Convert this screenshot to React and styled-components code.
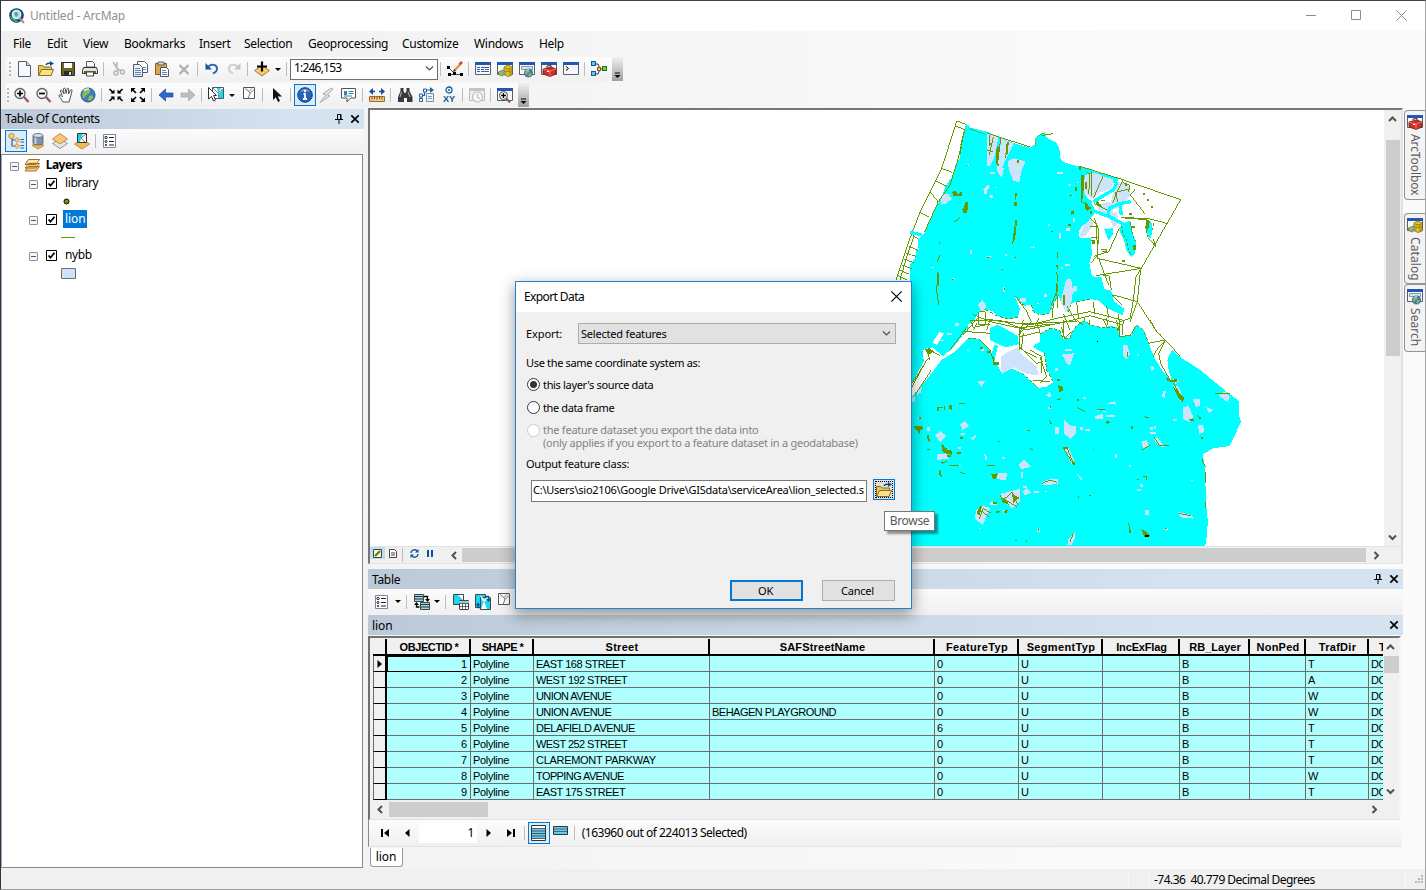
import React from "react";
import styled, { createGlobalStyle, css } from "styled-components";

const ui = `"Noto Sans", "Open Sans", sans-serif`;
const grid = `"Liberation Sans", Arial, sans-serif`;

const GlobalStyle = createGlobalStyle`
  * { box-sizing: border-box; }
  html, body { margin: 0; padding: 0; overflow: hidden; }
  body { font: 12px/16px ${ui}; color: #000; background: #f0f0f0; }
`;

/* ---------- text ---------- */
const Text = styled.span`
  white-space: pre;
  letter-spacing: ${(p) => p.$ls ?? -0.3}px;
  color: ${(p) => p.$color || "inherit"};
`;

/* ---------- window ---------- */
const Window = styled.div`
  position: relative;
  width: 1426px;
  height: 890px;
  display: flex;
  flex-direction: column;
  border: 1px solid #2b3346;
  border-top-color: #3c3d49;
  border-right-color: #a5a5a5;
  border-bottom-color: #9a9a9a;
  background: linear-gradient(90deg, #f0f0f0, #fafafa 80%);
  overflow: hidden;
`;
const TitleBar = styled.header`
  height: 30px;
  flex: none;
  background: #fff;
  display: flex;
  align-items: center;
  padding: 0 17px 0 8px;
  color: #8f8f8f;
`;
const AppName = styled.div`
  flex: 1;
  display: flex;
  align-items: center;
  gap: 5px;
`;
const WindowButtons = styled.div`
  display: flex;
  gap: 34px;
  margin: 0 1px 2px 0;
`;
const MenuBar = styled.nav`
  height: 26px;
  flex: none;
  display: flex;
  align-items: center;
  padding-left: 12px;
`;
const MenuItem = styled.div`
  width: ${(p) => p.$w}px;
`;
const ToolRows = styled.div`
  height: 51px;
  flex: none;
  display: flex;
  flex-direction: column;
  align-items: flex-start;
  gap: 2px;
`;
const Toolbar = styled.div`
  height: 24px;
  display: flex;
  align-items: center;
  margin-left: 5px;
  padding-left: ${(p) => p.$pad}px;
  background: linear-gradient(#fcfcfc, #f0f0f0);
  border-radius: 3px 0 0 3px;
`;
const Grip = styled.i`
  width: 2px;
  height: 15px;
  margin-right: ${(p) => p.$gap}px;
  background: repeating-linear-gradient(#b5b5b5 0 2px, transparent 2px 4px);
`;
const ToolButton = styled.div`
  width: 22px;
  height: 22px;
  flex: none;
  display: flex;
  align-items: center;
  justify-content: center;
  padding-bottom: ${(p) => p.$lift || 0}px;
  ${(p) => p.$on && css`
    background: #dcebf8;
    border: 1px solid #0078d7;
  `}
`;
const Separator = styled.i`
  width: 1px;
  height: 14px;
  flex: none;
  margin: 0 3px 0 2px;
  background: #bdbdbd;
`;
const Caret = styled.i`
  width: 11px;
  flex: none;
  display: flex;
  justify-content: center;
  padding-right: 2px;
  &::after {
    content: "";
    border: 3px solid transparent;
    border-top: 3px solid #000;
    border-bottom: 0;
  }
`;
const Overflow = styled.div`
  width: 11px;
  height: 24px;
  margin-left: 2px;
  display: flex;
  align-items: flex-end;
  justify-content: center;
  padding-bottom: 2px;
  background: linear-gradient(#f0f0f0, #a0a0a0);
`;
const ScaleBox = styled.div`
  width: 148px;
  height: 21px;
  display: flex;
  align-items: center;
  justify-content: space-between;
  padding: 0 3px 2px;
  background: #fff;
  border: 1px solid #6f6f6f;
`;

/* ---------- work area ---------- */
const Work = styled.div`
  flex: 1;
  min-height: 0;
  display: flex;
`;
const Contents = styled.aside`
  width: 363px;
  flex: none;
  margin-top: 1px;
  display: flex;
  flex-direction: column;
`;
const PanelHeader = styled.div`
  height: 20px;
  flex: none;
  display: flex;
  align-items: center;
  gap: 7px;
  padding: 0 5px 0 4px;
  background: linear-gradient(90deg, #bbc9d8, #d5e2f0 80%);
  & > ${Text} {
    margin-top: ${(p) => p.$drop || 0}px;
  }
`;
const Grow = styled.div`
  flex: 1;
`;
const PanelTools = styled.div`
  height: ${(p) => p.$h || 25}px;
  flex: none;
  display: flex;
  align-items: center;
  padding: 0 0 ${(p) => p.$lift || 0}px ${(p) => p.$pl ?? 4}px;
  background: linear-gradient(#fbfbfb, #f0f0f0);
`;
const Tree = styled.div`
  height: 714px;
  width: 362px;
  padding-top: 1px;
  background: #fff;
  border: 1px solid #828790;
  border-left-color: #a6a9b0;
`;
const TreeRow = styled.div`
  height: 18px;
  display: flex;
  align-items: center;
  padding-left: ${(p) => p.$indent}px;
`;
const LayersIcon = styled.div`
  margin: 0 3px 0 5px;
`;
const Toggle = styled.i`
  width: 9px;
  height: 9px;
  margin-top: 2px;
  display: flex;
  align-items: center;
  justify-content: center;
  border: 1px solid #919191;
  border-radius: 1px;
  background: #f6f6f6;
  &::after {
    content: "";
    width: 5px;
    height: 1px;
    background: #3c56a4;
  }
`;
const Check = styled.svg`
  width: 11px;
  height: 11px;
  margin: 0 6px 0 8px;
`;
const LayerName = styled.span`
  height: 18px;
  line-height: 17px;
  padding: 0 2px;
  letter-spacing: ${(p) => p.$ls}px;
  ${(p) => p.$selected && css`
    color: #fff;
    background: #0078d7;
  `}
`;
const Main = styled.main`
  width: 1035px;
  flex: none;
  margin-left: 4px;
  display: flex;
  flex-direction: column;
`;
const MapFrame = styled.section`
  height: 456px;
  flex: none;
  display: grid;
  grid-template-columns: 1014px 1fr;
  grid-template-rows: 436px 1fr;
  column-gap: 2px;
  border: 1px solid #e3e3e3;
  border-width: 2px 2px 1px 2px;
  border-top-color: #767676;
  border-left-color: #767676;
  background: #f0f0f0;
`;
const MapCanvas = styled.svg`
  display: block;
  width: 1014px;
  height: 436px;
  background: #fff;
`;
const VScroll = styled.div`
  display: flex;
  flex-direction: column;
  align-items: center;
  width: ${(p) => p.$w || 14}px;
  height: ${(p) => p.$h}px;
  background: #f0f0f0;
`;
const ScrollArrow = styled.div`
  width: ${(p) => p.$w || 14}px;
  height: ${(p) => p.$h || 17}px;
  padding: 0 ${(p) => p.$pr || 0}px ${(p) => p.$pb || 0}px ${(p) => p.$pl || 0}px;
  flex: none;
  display: flex;
  align-items: center;
  justify-content: center;
`;
const Thumb = styled.div`
  width: ${(p) => p.$w || 14}px;
  height: ${(p) => p.$h || 14}px;
  flex: none;
  background: #cdcdcd;
`;
const MapFooter = styled.div`
  height: 17px;
  grid-column: 1 / 3;
  display: flex;
  align-items: center;
  border-top: 1px solid #e3e3e3;
`;
const ViewButton = styled.div`
  width: ${(p) => p.$w || 15}px;
  height: 12px;
  margin-bottom: 4px;
  display: flex;
  align-items: center;
  justify-content: center;
  background: ${(p) => (p.$on ? "#bfdcf5" : "transparent")};
`;
const TableDock = styled.section`
  margin-top: 5px;
  display: flex;
  flex-direction: column;
`;
const GridFrame = styled.div`
  height: 184px;
  width: 1033px;
  flex: none;
  margin-top: 1px;
  padding: 1px 0 0 3px;
  border: 2px solid #6f6f6f;
  border-width: 2px 2px 1px 2px;
  border-right-color: #f4f4f4;
  border-bottom-color: #e0e0e0;
  background: #f0f0f0;
`;
const GridTop = styled.div`
  display: flex;
  height: 162px;
`;
const Sheet = styled.div`
  width: 1010px;
  display: grid;
  grid-template-columns: 14px 84px 63px 176px 225px 84px 84px 77px 70px 56px 63px 14px;
  grid-template-rows: 17px repeat(9, 16px);
  font: 11px/14px ${grid};
`;
const HeadCell = styled.div`
  overflow: hidden;
  padding: 1px 0 0 2px;
  text-align: center;
  font-weight: 700;
  letter-spacing: ${(p) => p.$ls ?? 0.35}px;
  background: #f0f0f0;
  border-right: 2px solid #000;
  border-bottom: 2px solid #000;
  white-space: nowrap;
  ${(p) => p.$partial && css`
    padding-left: 10px;
    text-align: left;
    border-right: 0;
  `}
`;
const Cell = styled.div`
  overflow: hidden;
  padding: 1px ${(p) => (p.$num ? 3 : 0)}px 0 2px;
  text-align: ${(p) => (p.$num ? "right" : "left")};
  letter-spacing: ${(p) => p.$ls ?? 0}px;
  white-space: nowrap;
  background: #afffff;
  border-right: ${(p) => (p.$last ? 0 : 1)}px solid #6c6c6c;
  border-bottom: 1px solid #6c6c6c;
  ${(p) => p.$current && css`
    outline: 1px solid #000;
    outline-offset: -1px;
  `}
`;
const RowHead = styled.div`
  display: flex;
  align-items: center;
  justify-content: center;
  background: #f0f0f0;
  border-left: 1px solid #6c6c6c;
  border-right: 2px solid #000;
  border-bottom: 1px solid #000;
`;
const HScroll = styled.div`
  height: 17px;
  display: flex;
  align-items: center;
  padding-right: 16px;
`;
const NavBar = styled.div`
  height: 27px;
  flex: none;
  width: 1034px;
  display: flex;
  align-items: center;
  padding-left: 5px;
  background: linear-gradient(#fcfcfc, #f0f0f0);
  border-left: 1px solid #8a8a8a;
  border-bottom: 1px solid #e3e3e3;
`;
const RecordBox = styled.div`
  width: 58px;
  height: 20px;
  padding: 2px 3px 0 0;
  text-align: right;
  background: #fff;
`;
const NavButton = styled.div`
  width: ${(p) => p.$w}px;
  display: flex;
  justify-content: center;
`;
const SelectionCount = styled.div`
  padding-left: 1px;
`;
const SheetTab = styled.div`
  width: 33px;
  height: 19px;
  margin: 1px 0 0 2px;
  padding-right: 1px;
  text-align: center;
  line-height: 18px;
  background: #fff;
  border: 1px solid #9a9a9a;
  border-top: 0;
  border-radius: 0 0 3px 3px;
`;
const SideTabs = styled.aside`
  width: 21px;
  margin-left: 1px;
  padding-top: 2px;
`;
const SideTab = styled.div`
  width: 21px;
  height: ${(p) => p.$h}px;
  margin-bottom: ${(p) => p.$gap || 0}px;
  display: flex;
  flex-direction: column;
  align-items: center;
  gap: 4px;
  padding: 3px 1px 0 0;
  border: 1px solid #949494;
  border-right: 0;
  border-radius: 4px 0 0 4px;
  background: #f3f3f3;
  span {
    writing-mode: vertical-rl;
    line-height: 14px;
    color: #5c5c5c;
    letter-spacing: ${(p) => p.$ls}px;
  }
`;
const StatusBar = styled.footer`
  height: 20px;
  flex: none;
  display: flex;
  align-items: center;
  background: #f0f0f0;
`;
const StatusCell = styled.div`
  width: ${(p) => p.$w}px;
  height: 18px;
  padding-left: 5px;
  line-height: 20px;
  border-right: 1px solid #fafafa;
`;

/* ---------- dialog ---------- */
const Dialog = styled.section`
  position: absolute;
  left: 514px;
  top: 280px;
  width: 397px;
  height: 328px;
  font-size: 11px;
  line-height: 13px;
  background: #f0f0f0;
  border: 1px solid #1883d7;
  box-shadow: 0 5px 14px 1px rgba(0, 0, 0, 0.38);
`;
const DialogTitle = styled.div`
  height: 30px;
  display: flex;
  align-items: center;
  justify-content: space-between;
  padding: 0 9px 2px 8px;
  font-size: 12px;
  background: #fff;
`;
const DialogRow = styled.div`
  display: flex;
  align-items: ${(p) => p.$align || "center"};
  height: ${(p) => p.$h || 16}px;
  margin-top: ${(p) => p.$mt}px;
  padding-left: ${(p) => p.$pl ?? 10}px;
  & > ${Text} {
    margin-top: -2px;
  }
`;
const ExportLabel = styled.label`
  width: 52px;
`;
const Select = styled.div`
  width: 318px;
  height: 21px;
  display: flex;
  align-items: center;
  justify-content: space-between;
  padding: 0 4px 0 2px;
  background: #e1e1e1;
  border: 1px solid #adadad;
`;
const Radio = styled.i`
  width: 13px;
  height: 13px;
  margin: 0 3px 1px 1px;
  flex: none;
  display: flex;
  align-items: center;
  justify-content: center;
  border: 1px solid ${(p) => (p.$off ? "#cccccc" : "#333")};
  border-radius: 50%;
  background: #fff;
  &::after {
    content: "";
    width: 7px;
    height: 7px;
    border-radius: 50%;
    background: ${(p) => (p.$on ? "#333" : "transparent")};
  }
`;
const TwoLines = styled.div`
  display: flex;
  flex-direction: column;
  margin-top: -1px;
`;
const PathInput = styled.div`
  width: 336px;
  height: 22px;
  padding: 2px 0 0 1px;
  background: #fff;
  border: 1px solid #7a7a7a;
`;
const BrowseButton = styled.div`
  width: 22px;
  height: 21px;
  margin: 0 0 2px 6px;
  display: flex;
  align-items: center;
  justify-content: center;
  border: 1px solid #0078d7;
  background: #e1e1e1;
  outline: 1px dotted #000;
  outline-offset: -3px;
`;
const Actions = styled.div`
  display: flex;
  justify-content: flex-end;
  gap: 19px;
  margin-top: 78px;
  padding-right: 16px;
`;
const PushButton = styled.div`
  width: 73px;
  height: 21px;
  display: flex;
  align-items: center;
  justify-content: center;
  padding-right: 2px;
  background: #e1e1e1;
  border: ${(p) => (p.$primary ? "2px solid #0078d7" : "1px solid #adadad")};
`;
const Tooltip = styled.div`
  position: absolute;
  left: 883px;
  top: 510px;
  width: 51px;
  height: 20px;
  text-align: center;
  line-height: 18px;
  color: #575757;
  background: #fff;
  border: 1px solid #767676;
  box-shadow: 3px 3px 2px rgba(0, 0, 0, 0.4);
`;

/* ---------- icons ---------- */
const Glyph = styled.svg`
  display: block;
  flex: none;
  overflow: visible;
`;
const Icon = ({ children, w = 16, h = 16 }) => (
  <Glyph width={w} height={h} viewBox={`0 0 ${w} ${h}`} fill="none">
    {children}
  </Glyph>
);
const WinFrame = () => (
  <>
    <path d="M.5 1.5h15v12H.5z" fill="#f4f7fb" stroke="#5a5f68" />
    <path d="M0 1h16v3H0z" fill="#2356b0" />
  </>
);
const Box = ({ x, y, s = 4, f, c }) => (
  <rect x={x + 0.5} y={y + 0.5} width={s} height={s} fill={f} stroke={c} />
);
const Lens = ({ plus }) => (
  <>
    <path d="M10 10l4.500 5" stroke="#9a5b50" strokeWidth="2.4" />
    <circle cx="6" cy="6.5" r="5" fill="#f4f6f8" stroke="#5b5f66" strokeWidth="1.3" />
    <path d={plus ? "M3 6.5h6M6 3.500v6" : "M3 6.5h6"} stroke="#000" strokeWidth="1.7" />
  </>
);
const Globe = ({ x = 8, y = 8, r = 7.2 }) => (
  <g transform={`translate(${x} ${y}) scale(${r / 7.2})`}>
    <circle r="7" fill="#3c7cc4" stroke="#2a5486" />
    <path d="M-4-5C-1-8 3-6 2-3S-2-1-3 2s-3 0-3-2zM1 1c3-2 5 0 4 2S2 7 0 5z" fill="#8dbb52" />
    <path d="M-4-4c1-2 3-2 5-2" stroke="#d8ecff" strokeWidth="1.4" />
  </g>
);
const Folder = () => (
  <Icon>
    <path d="M.5 14V4.5h4l1.5 1.5h7.5V14z" fill="#e8c95a" stroke="#8a6a20" />
    <path d="M.7 14.500L3.5 8.500h12l-2.500 6z" fill="#f7e28c" stroke="#8a6a20" />
    <path d="M8 4c1-2 3-2 5-1.500" stroke="#0f4c8c" strokeWidth="1.5" />
    <path d="M12 0l4 2.500-4 2.500z" fill="#0f4c8c" />
  </Icon>
);
const ListBox = () => (
  <Icon>
    <path d="M1.500 1.500h12v13h-12z" fill="#fff" stroke="#7886a0" />
    <path d="M7 4.500h5M7 8.500h5M7 12h5" stroke="#222" />
    <circle cx="4" cy="4.500" r="1.200" stroke="#222" />
    <circle cx="4" cy="8.500" r="1" stroke="#222" />
    <circle cx="4" cy="12" r="1" fill="#222" />
  </Icon>
);
const ToolboxWin = () => (
  <Icon>
    <WinFrame />
    <path d="M2 8l8-2 5 2v5l-6 2.500-7-2.500z" fill="#c8302a" stroke="#7a1512" strokeWidth=".8" />
    <path d="M2 8l7 2 6-2M9 10v5" stroke="#ff8d80" strokeWidth=".8" />
    <path d="M6 6.500V5l4-.5V6" stroke="#7a1512" />
    <path d="M6 10.500h2" stroke="#fff" />
  </Icon>
);
const CatalogWin = () => (
  <Icon>
    <WinFrame />
    <path d="M7 6l4-2 4 2v8l-4 1.500-4-2z" fill="#e3c31c" stroke="#7a6408" strokeWidth=".8" />
    <path d="M8.500 7.500l4 .5M8.500 10l4 .5M13 7v7" stroke="#7a6408" strokeWidth=".8" />
    <path d="M1.500 11l5-2 2.500 2.500-3.500 3.500-4-1.500z" fill="#c9b22a" stroke="#4d6d60" strokeWidth=".8" />
    <circle cx="6" cy="12" r="1.500" fill="#5bb0d8" />
  </Icon>
);
const SearchWin = () => (
  <Icon>
    <WinFrame />
    <path d="M2.500 5.500h11v3h-11z" fill="#dbe5f1" stroke="#8b97a8" />
    <Globe x={9.5} y={12} r={4.2} />
  </Icon>
);
const Pin = () => (
  <Icon w={8} h={10}>
    <path d="M1.500.5h3.500v5h-3.500zM-1 5.500h8M3 6v4" stroke="#000" />
    <path d="M4.500 0v6" stroke="#000" />
  </Icon>
);
const Close = ({ s = 8, w = 1.7, c = "#000" }) => (
  <Icon w={s} h={s}>
    <path d={`M.3.3L${s - 0.3} ${s - 0.3}M${s - 0.3} .3L.3 ${s - 0.3}`} stroke={c} strokeWidth={w} />
  </Icon>
);
const chevrons = {
  up: "M1 6l3.500-3.500L8 6",
  down: "M1 2.500L4.500 6 8 2.500",
  left: "M6 1L2.500 4.500 6 8",
  right: "M2.500 1L6 4.500 2.500 8",
};
const Chevron = ({ dir, w = 2 }) => (
  <Icon w={9} h={9}>
    <path d={chevrons[dir]} stroke="#505050" strokeWidth={w} />
  </Icon>
);
const OverflowGlyph = () => (
  <Icon w={7} h={7}>
    <path d="M1 1h5" stroke="#000" />
    <path d="M.5 3h6L3.500 6z" fill="#000" />
  </Icon>
);

const I = {
  logo: (
    <Icon>
      <circle cx="7.500" cy="7.500" r="7.300" fill="#0d4f7d" />
      <path d="M1 8c1 5 5 7 9 6l-5-4z" fill="#35a06c" />
      <circle cx="7.500" cy="6.500" r="4.200" fill="#a8dcef" stroke="#e8f4fa" strokeWidth="1.300" />
      <path d="M5 5l3-1 1 3-2 2z" fill="#5ba56f" />
      <path d="M10.500 10l4.500 5" stroke="#b98a70" strokeWidth="2" />
    </Icon>
  ),
  doc: (
    <Icon>
      <path d="M2.500.5h8l4 4v11h-12z" fill="#f5f9fe" stroke="#55606e" />
      <path d="M10.500.5v4h4" fill="#cfdcec" stroke="#55606e" />
    </Icon>
  ),
  open: <Folder />,
  save: (
    <Icon>
      <path d="M1.500 1.500h13v13h-13z" fill="#6f6420" stroke="#2c2a18" />
      <path d="M4 2h8v5H4z" fill="#fff" />
      <path d="M4 10h8v5H4z" fill="#2a2a2a" />
      <path d="M9 11h2v3H9z" fill="#ddd" />
    </Icon>
  ),
  print: (
    <Icon>
      <path d="M4.500 6V.5h6l2 2V6z" fill="#fff" stroke="#555" />
      <path d="M1.500 6.500h13l1 3v3H.5v-3z" fill="#e6e2cf" stroke="#333" />
      <path d="M2 11h12" stroke="#333" strokeWidth="1.5" />
      <path d="M4.500 11h7v4h-7z" fill="#fff" stroke="#444" />
    </Icon>
  ),
  cut: (
    <Icon>
      <path d="M3 1l6 9M7 1L6.500 8" stroke="#b4b4b4" strokeWidth="1.500" />
      <circle cx="6" cy="12" r="2" stroke="#b4b4b4" strokeWidth="1.400" />
      <circle cx="12.500" cy="11" r="2" stroke="#b4b4b4" strokeWidth="1.400" />
      <path d="M7 8l5 1.500" stroke="#b4b4b4" strokeWidth="1.300" />
    </Icon>
  ),
  copy: (
    <Icon>
      <path d="M5.500.5h7l3 3v8h-10z" fill="#fff" stroke="#4a5a70" />
      <path d="M1.500 3.500h6l3 3v9h-9z" fill="#eef4fc" stroke="#4a5a70" />
      <path d="M3 7.500h5M3 9.500h6M3 11.500h6M3 13.500h6M11 6.500h3M11 8.500h3" stroke="#5d84b5" />
    </Icon>
  ),
  paste: (
    <Icon>
      <path d="M1.500 2.500h11v11h-11z" fill="#d9a458" stroke="#8b5f22" />
      <path d="M4 1h6v3H4z" fill="#d8d8d8" stroke="#444" strokeWidth=".8" />
      <path d="M6.500 6.500h6l2 2v7h-8z" fill="#fff" stroke="#4a5a70" />
      <path d="M8 9.500h4M8 11.500h5M8 13.500h5" stroke="#5d84b5" />
    </Icon>
  ),
  del: (
    <Icon>
      <path d="M3.500 4l9 9M12.500 4l-9 9" stroke="#adadad" strokeWidth="2.200" />
    </Icon>
  ),
  undo: (
    <Icon>
      <path d="M4.500 5.500c3-3 8.500-2 8.500 2 0 2.500-1.500 4-4 5" stroke="#2a66b4" strokeWidth="1.900" />
      <path d="M1.500 2v6.500H8z" fill="#1d539c" />
    </Icon>
  ),
  redo: (
    <Icon>
      <path d="M11.500 5.500c-3-3-8.500-2-8.500 2 0 2.500 1.500 4 4 5" stroke="#cfcfcf" strokeWidth="1.900" />
      <path d="M14.500 2v6.500H8z" fill="#c6c6c6" />
    </Icon>
  ),
  add: (
    <Icon>
      <path d="M8 4.500l7.500 5L8 15 .5 9.500z" fill="#f6c878" stroke="#b07a28" />
      <path d="M8 .500v10M3 5.500h10" stroke="#000" strokeWidth="2.200" />
    </Icon>
  ),
  editor: (
    <Icon>
      <path d="M2 7l5 5M3 13.500h10" stroke="#222" strokeWidth=".8" />
      <path d="M0 5h3v3H0zM1 12h3v3H1zM6 11h3v3H6zM13 12h3v3h-3z" fill="#000" />
      <path d="M7.500 9.500L13 3.500" stroke="#e0952c" strokeWidth="2.200" />
      <path d="M12.500 3.500L15 .8" stroke="#d6453c" strokeWidth="2.600" />
      <path d="M6 11l1-3 2 2z" fill="#333" />
    </Icon>
  ),
  table: (
    <Icon>
      <WinFrame />
      <path d="M2 6.500h3M2 8.500h3M2 10.500h3M6 6.500h8M6 8.500h3M6 10.500h8" stroke="#2c65b4" />
      <path d="M10 8.500h4" stroke="#d33" />
    </Icon>
  ),
  catalog: <CatalogWin />,
  search: <SearchWin />,
  toolbox: <ToolboxWin />,
  python: (
    <Icon>
      <WinFrame />
      <path d="M3 5.500l2.500 2L3 9.500" stroke="#000" />
    </Icon>
  ),
  model: (
    <Icon>
      <path d="M5 3h2l2 5-2 5H5M9 8h3" stroke="#333" />
      <Box x={0} y={0} f="#5fc6ef" c="#135a99" />
      <Box x={0} y={10} f="#5fc6ef" c="#135a99" />
      <Box x={6} y={6} s={3} f="#f6c760" c="#8a5a10" />
      <Box x={11} y={5} f="#6ed04c" c="#1e7010" />
    </Icon>
  ),
  zoomin: <Icon><Lens plus /></Icon>,
  zoomout: <Icon><Lens /></Icon>,
  pan: (
    <Icon>
      <path
        d="M5 15l-4-6c-.5-1.500 1-1.500 2-.5l1.500 1.500L2.500 4c-.2-1.300 1.200-1.500 1.700-.3L6 7 5.500 2c0-1.300 1.500-1.300 1.800 0L8 6.500 9 2c.2-1.200 1.700-1 1.600.2L10.500 7l2-4c.6-1 1.900-.5 1.500.8L12.500 10 11 15z"
        fill="#fff"
        stroke="#444"
        strokeWidth=".9"
      />
    </Icon>
  ),
  globe: <Icon><Globe /></Icon>,
  fixedin: (
    <Icon>
      <path d="M1.500 2l4 4M14.500 2l-4 4M1.500 14l4-4M14.500 14l-4-4" stroke="#000" strokeWidth="1.700" />
      <path d="M6.500 2.500v4h-4zM9.500 2.500v4h4zM6.500 13.500v-4h-4zM9.500 13.500v-4h4z" fill="#000" />
    </Icon>
  ),
  fixedout: (
    <Icon>
      <path d="M2 2l4 4M14 2l-4 4M2 14l4-4M14 14l-4-4" stroke="#000" strokeWidth="1.700" />
      <path d="M1 1v4.500L5.500 1zM15 1v4.500L10.500 1zM1 15v-4.500L5.500 15zM15 15v-4.500L10.500 15z" fill="#000" />
    </Icon>
  ),
  back: (
    <Icon>
      <path d="M1 8l6.500-6v4H15v4H7.500v4z" fill="#2c6ad0" stroke="#1c4692" strokeWidth=".7" />
    </Icon>
  ),
  forward: (
    <Icon>
      <path d="M15 8L8.500 2v4H1v4h7.500v4z" fill="#bdbdbd" stroke="#a6a6a6" strokeWidth=".7" />
    </Icon>
  ),
  selectf: (
    <Icon>
      <path d="M4.500.5h11v11h-11z" fill="#fff" stroke="#555" />
      <path d="M9 1h4l-3 5zM15 2v9h-4l-1-4z" fill="#19d9ee" />
      <path d="M5 1l5 5 5-4M10 6.500l1 5" stroke="#667" strokeWidth=".8" />
      <path d="M.5.500l8 8H5.700l1.800 4.500-2 1-2-4.500-3 2.500z" fill="#fff" stroke="#333" />
    </Icon>
  ),
  clear: (
    <Icon>
      <path d="M2.500 1.500h11v11h-11z" fill="#fff" stroke="#555" />
      <path d="M4 2.500l4 3 3-3M8 5.500l1 2-2 5M9 7.500l4-4" stroke="#777" />
    </Icon>
  ),
  pointer: (
    <Icon>
      <path d="M4 1l9 8.500H8.800L11 14l-2 1-2.200-4.700L4 13z" fill="#111" />
    </Icon>
  ),
  info: (
    <Icon>
      <circle cx="8" cy="8" r="7.300" fill="#2761b8" stroke="#163f86" />
      <path d="M3 5c2-4 8-4 10 0-3-1.500-7-1.500-10 0z" fill="#7fa9e6" />
      <path d="M8 3v2.200M6.500 7H8v5M6 12h4" stroke="#fff" strokeWidth="1.800" />
    </Icon>
  ),
  bolt: (
    <Icon>
      <path d="M12 1L4 7l3 1-6 7.500L11 9 8.500 8 14 2z" fill="#e2e2e2" stroke="#ababab" />
    </Icon>
  ),
  popup: (
    <Icon>
      <path d="M.500 1.500h14v9.500h-5l-3.500 4v-4H.500z" fill="#fff" stroke="#555" />
      <path d="M3 4h3v4H3z" fill="#2f83bd" />
      <path d="M7.500 4.500h5M7.500 6.500h5M3 9h8" stroke="#2f83bd" />
    </Icon>
  ),
  measure: (
    <Icon>
      <path d="M.5 9.500h15v5H.5z" fill="#f3c98b" stroke="#a5682c" />
      <path d="M3 10v2.500M5.500 10v2M8 10v2.500M10.500 10v2M13 10v2.500" stroke="#7a4a1a" />
      <path d="M2 4.500h4M10 4.500h4" stroke="#11509a" strokeWidth="1.600" />
      <path d="M0 4.500L4 1v7zM16 4.500L12 1v7z" fill="#11509a" />
    </Icon>
  ),
  find: (
    <Icon>
      <path d="M3.500 1h3v3l1 2h1l1-2V1h3v3l3 6v5h-5.500v-4h-3v4H1v-5l2.500-6z" fill="#3a3a3a" />
      <path d="M4.500 5L3 10M11 5l2 5" stroke="#bbb" />
    </Icon>
  ),
  route: (
    <Icon>
      <path d="M2 13V8.500h3.500V3H12" stroke="#1b62a5" strokeWidth="1.200" />
      <path d="M.5 11.500h3v3h-3zM.5 7h3v3h-3zM4.500 2h3v3h-3z" fill="#fff" stroke="#1b62a5" />
      <path d="M11 0l4 3-4 3z" fill="#1b62a5" />
      <path d="M7.500 6.500h7v8h-7z" fill="#eef3f8" stroke="#7d8ea3" />
      <path d="M9 9.500h4M9 11.500h4" stroke="#6fa0cc" />
    </Icon>
  ),
  time: (
    <Icon>
      <path d="M.5 1.500h15v12H.5z" fill="#efefef" stroke="#bdbdbd" />
      <path d="M0 1h16v3H0z" fill="#c3c3c3" />
      <circle cx="8.500" cy="10" r="5" fill="#f5f5f5" stroke="#b5b5b5" />
      <path d="M8.500 7v3.500l2.500 1" stroke="#b5b5b5" />
    </Icon>
  ),
  viewer: (
    <Icon>
      <WinFrame />
      <path d="M9 11l4 4.500" stroke="#9a5b50" strokeWidth="2" />
      <circle cx="6.500" cy="8.500" r="4" fill="#fff" stroke="#444" />
      <path d="M4 8.500h5M6.500 6v5" stroke="#000" strokeWidth="1.300" />
    </Icon>
  ),
  drawOrder: (
    <Icon>
      <path d="M4 4v9h5M4 7h5M12.500 6.500H16M12.500 9H16M12.500 12.500H16M12.500 15H16" stroke="#28669f" strokeWidth="1.200" />
      <circle cx="3.500" cy="3" r="2.700" fill="#f8cf7d" stroke="#b57a25" strokeWidth=".8" />
      <path d="M9 4.500l2.500 2.500L9 9.500 6.500 7zM9 10.500l2.500 2.500L9 15.500 6.500 13z" fill="#f8cf7d" stroke="#b57a25" strokeWidth=".8" />
    </Icon>
  ),
  source: (
    <Icon>
      <path d="M8 9l6 3.500-6 3.500-6-3.500z" fill="#f2b955" stroke="#b57a25" strokeWidth=".8" />
      <path d="M3 2.500v8c1 2 9 2 10 0v-8z" fill="#7e92ac" stroke="#4c5d74" strokeWidth=".8" />
      <path d="M5.500 4v7" stroke="#c8d4e2" strokeWidth="2" />
      <ellipse cx="8" cy="2.500" rx="5" ry="2" fill="#d5dfeb" stroke="#4c5d74" strokeWidth=".8" />
    </Icon>
  ),
  visible: (
    <Icon>
      <path d="M8 5.500l7.500 5-7.500 5-7.500-5z" fill="#e6e6e6" stroke="#777" strokeWidth=".8" />
      <path d="M8 .5l7.500 5.500L8 11 .5 6z" fill="#f6c878" stroke="#b07a28" strokeWidth=".8" />
    </Icon>
  ),
  selection: (
    <Icon>
      <path d="M8 6l7.500 5L8 16 .5 11z" fill="#f2b955" stroke="#b07a28" strokeWidth=".8" />
      <path d="M3.500.5h9v9h-9z" fill="#fff" stroke="#333" />
      <path d="M4 1h5L7 5l-1 4H4z" fill="#17d4ea" />
      <path d="M7 5l5-4M7 5l4 4" stroke="#777" />
    </Icon>
  ),
  options: <ListBox />,
  related: (
    <Icon>
      <path d="M1.500.5h9v7h-9z" fill="#8adbe8" stroke="#444" />
      <path d="M7.500 8.500h9v7h-9z" fill="#8adbe8" stroke="#444" />
      <path d="M2 2.500h8M2 5h8M8 10.500h8M8 13h8" stroke="#333" />
      <path d="M11 2.500h3.500V5M6.500 13H3.500V11" stroke="#000" strokeWidth="1.300" />
      <path d="M12 5h5l-2.500 3zM1 11h5L3.500 8z" fill="#000" />
    </Icon>
  ),
  selAttr: (
    <Icon>
      <path d="M1.500.5h10v10h-10z" fill="#19d9ee" stroke="#444" />
      <path d="M6 1l5 5V1z" fill="#fff" />
      <path d="M7.500 6.500h9v9h-9z" fill="#fff" stroke="#444" />
      <path d="M7 7h10v2H7z" fill="#9cc8dc" />
      <path d="M7.500 9.500h9M7.500 12.500h9M10.500 9v7M13.500 9v7" stroke="#444" strokeWidth=".8" />
    </Icon>
  ),
  switchSel: (
    <Icon>
      <path d="M1.500.5h10v13h-10z" fill="#19d9ee" stroke="#444" />
      <path d="M6.500 3.500h10v12h-10z" fill="#19d9ee" stroke="#444" />
      <path d="M6 1l4 4-1 3zM7 15l3-8 3 8z" fill="#fff" />
      <path d="M10 7l5-4" stroke="#fff" strokeWidth="2" />
      <path d="M11 2.500h3.500V5M7 13.500H4V11" stroke="#0c4f94" strokeWidth="1.400" />
      <path d="M12 5h5l-2.500 3zM1.500 11.500h5L4 8.500z" fill="#0c4f94" />
    </Icon>
  ),
  allRecords: (
    <Icon>
      <path d="M.5.5h14v15H.5z" fill="#fff" stroke="#333" />
      <path d="M1 4h13v9H1z" fill="#62cfe4" />
      <path d="M1 3.500h13M1 6h13M1 8.500h13M1 11h13M1 13.500h13" stroke="#446" strokeWidth=".9" />
    </Icon>
  ),
  selRecords: (
    <Icon w={16} h={10}>
      <path d="M.5.5h14v8H.5z" fill="#62cfe4" stroke="#333" />
      <path d="M1 3h13M1 5.500h13" stroke="#446" strokeWidth=".8" />
    </Icon>
  ),
  layers: (
    <Icon>
      <path d="M4.500 9.500h11L12 14H1zM4.500 6.500h11L12 11H1zM4.500 2.500h11L12 7.500H1z" fill="#f4cb80" stroke="#a4702c" />
      <path d="M5 3.200h9.500L13.500 5h-10z" fill="#fdeabf" />
    </Icon>
  ),
};

const XY = styled.div`
  display: flex;
  flex-direction: column;
  align-items: center;
  gap: 1px;
  padding-bottom: 1px;
  font: bold 9px/8px ${grid};
  color: #14509a;
`;

const lifts = { clear: 3, selRecords: 5 };
const Tool = ({ name, on }) => <ToolButton $on={on} $lift={lifts[name]}>{I[name]}</ToolButton>;
const renderTools = (list) =>
  list.map((t, i) => {
    if (t === "|") return <Separator key={i} />;
    if (t === "v") return <Caret key={i} />;
    if (t === "xy")
      return (
        <ToolButton key={i}>
          <XY>
            <Icon w={8} h={8}>
              <circle cx="4" cy="4" r="3" stroke="#14609f" strokeWidth="1.300" />
              <circle cx="4" cy="4" r="1" fill="#14609f" />
            </Icon>
            XY
          </XY>
        </ToolButton>
      );
    return <Tool key={i} name={t.replace("*", "")} on={t.endsWith("*")} />;
  });

/* ---------- map ---------- */
const C = "#00ffff";
const G = "#669900";
const L = "#cfe2fb";

const north =
  "M228 58L236 60 240 68 290 80 330 98 375 116 420 128 436 118 438 98 455 84 464 84 470 98 498 112 508 132 512 164 524 172 540 178 575 186 620 202 686 220 680 236 600 208 584 214 584 272 606 290 612 330 600 340 584 354 566 378 570 400 602 398 606 450 598 474 606 514 634 516 642 550 668 566 672 590 704 612 698 630 660 614 640 600 630 588 600 582 560 590 544 596 534 622 516 600 506 570 492 592 478 624 452 630 430 620 424 600 404 602 388 590 374 572 390 612 384 636 352 642 320 632 306 618 290 614 268 620 250 650 228 662 220 690 60 690 60 478 76 460 78 430 86 436 84 404 106 380 118 350 138 310 158 270 166 244 190 210 196 180 210 160 216 110 222 84z";
const southCyan =
  "M60 236L105 185 155 120 195 95 235 54 268 58 298 88 312 118 335 158 365 146 395 158 430 190 445 204 470 200 490 186 478 160 470 150 464 100 440 88 428 78 450 66 450 42 482 24 508 30 520 56 540 54 546 36 560 16 583 2 600 14 640 24 660 18 680 22 690 48 726 46 732 24 740 16 760 30 776 68 792 112 820 156 846 184 836 150 832 120 846 90 872 112 930 150 1010 215 1046 242 1048 290 1054 306 1046 320 1036 344 1018 378 970 385 938 403 946 450 947 540 953 600 952 640 945 680 60 680z";

// Irregular filled patches, given as closed outlines.
const northPatches =
  "M290 84l38 14 -10 40 -14 46 -14-2z M334 100l42 18 -14 34 -16 16 -10 50 -16-20 6-36z M354 166l20-6 32 10 -12 28 -6 34 -18-4 -14-36z M584 210l30-6 56 20 -4 26 -34 12 -28 20 -22-20z M672 244l26-14 22 10 2 32 -28 32 -22 10 -10-14z M620 300l36-10 20 10 -12 34 -36-12z M156 270l18-4 12 16 -20 14 -14 4z M655 330l26-10 4 36 -14 12z M586 350l18-12 6 20 -22 34 -22 6z M528 524l16-2 2 26 16 8 -14 8 -6 40 -16 18 -14-32z M264 600l14-14 12 20 -14 16z M280 254l14-16 6 6 -16 24z M645 370h24l-2 24-10 12z M500 200h20v8h-20z M416 430l14-6 6 4z M506 384l8 2-4 24z";
const southPatches =
  "M333 110l20-14 30 -14 8 18 50 40 4 26 -34-4 -38-20 -38 20z M516 104l36-4 -12 36 -6 0z M698 76l14 0 8 28 -10 12 -12-10z M134 346l18-12 18 14 -18 18z M210 312l14-8 14 14 -20 12z M140 404l30-4 6 16 -36 4z M386 434l16-14 20 20 -28 8z M320 466l8-8 24 2 -4 20 -26-2z M330 522l60-16 0 40 -24 20 -22-20z M398 514l12-10 14 14 -20 8z M258 572l14-16 30 8 -14 28 -10 22 -24-18z M454 486l26-8 24 0 v14 l-46 4z M522 300l16 16 20 2 0 24 -16 16 -20-18z M614 288l24-6v14h-22z M650 250l24-6 4 10zM648 284h28v8h-28z M878 262l18-4 14 34 -10 14 -20-8z M908 236l22 0 0 22 -12 4z M948 262l20 6 -10 12z M924 316l16-2 2 22 -14 6z M790 354l10-2 26 28 -12 0 -18-14z M756 364l14-4 8 20 -20 4z M866 576l40 10 4 10 -40-4z M534 660l20-24 0 20 -10 20 -12 0z M262 182l24 0 -12 20z M986 226l22-14 12 20 -8 14z M466 228l14-12 4 16z M232 348l12 6 16-10 -10 18zM282 400l10 12-4 14z M560 460l18 18-6 2z M520 380l14 0 20 46 -8 8z M850 196l16 4 16 40 -10 4z M820 212l8 0-4 22-8-4z M850 178l16 4 -10 10z M86 206l10-6-4 18-12 8z M780 140l10-2 2 10-8 4z M740 106l6-4 2 8z";

const northGreenBlobs =
  "M296 90l4 0 2 30 -6 6z M320 120l8 10 -4 40 4 16 -10-10z M350 112l6 0 -4 40 -6-4z M574 210h8l-2 66-8 20z M584 292l12 0 6 16 -10 10 -8-8z M616 286l8 4 14 18 -18-6z M700 232l18 6 -10 6z M184 262l12-6 8 14 10-10 4 14 -24-2z M226 290l8 2 -2 30 -10 4 -6-14 6-4z M372 290l8 0 0 12-8 2z M374 360l4 8 -2 30-8 20-2 0z M140 500l6 4 0 40-6-6z M498 530l6 10 -2 30 -4 0z M520 570l4 0 2 30-6 0z M160 632l12 6 14 0 6 10 -14-2-16-10z M380 164h8v10h-8z M758 264h6v6h-6zM782 304h6v6h-6zM716 324h10v6h-10z M544 318l8-2 0 10-8 4z M604 406h10v12h-8z M190 352l20-16-8 12z M498 480l8 2-4 10z M210 130l6-4-6 30z";
const southGreenBlobs =
  "M74 318l22 0 4 10-10 2 0 16-8-14-10-8z M504 196l14 4 0 12-10 4z M110 344l6 0 4 22-6-4z M140 262l6-2 2 12-8 0z M160 260l6-4-2 14zM178 256l8 0 0 14-8 -4z M154 376l8 0 4 12 18 2 2 14 -16-2 -12-8z M146 448l6 4 4 20-8-8z M516 380l20 0 -4 8 -10 0z M546 426l10 0 0 8-8 0z M848 200l14 10 20 24 -4 12 -12-10z M896 296l14 0 4 8-14 0z M922 286l14 8-6 4z M764 288l14 4-10 4z M304 462l20 0 -8 16-10-4z M330 520l6 20 14 0 6 14-20-8z M366 520l22 14-18 14z M268 560l8-2 -8 30-8-8z M648 302l16 4-14 6z M478 300l8 10-4 4z M828 172l16 8 18-4 0 10-30-2z M312 126h14v10h-14z M106 88l12-4 14 10 -18 12z M754 628l12 6 14 14-16 4z M152 428l24-6-20 10z";

const northLines =
  "M201 48L228 58M201 48L195 62 224 74 212 120M196 62L155 190 90 322 60 400 18 525M224 74L205 160 180 240 145 290 104 380M155 190L186 202M138 228L170 244M122 262L144 290M90 322L118 336M70 392L84 402M56 424L84 436M48 444L78 456M42 462L72 474M36 480L66 492M30 496L58 508M24 512L50 524M72 394L52 450 30 524" +
  "M290 84L420 126M455 92L490 86M310 96L298 150M332 100L322 180M356 112L346 160M290 136L308 140" +
  "M570 184L686 220 872 284 754 490M872 284L830 358M834 356L772 340 692 338 770 344M580 210L574 290 600 306M640 212L610 280M724 274L766 328M720 240L716 262M700 224l-20 40-12 30M736 252l-16 20M590 200l10 8-4 60" +
  "M602 340L620 360 622 450 604 474M612 338L626 374 622 460 754 490 618 512M600 364h20M604 398h20M612 454L656 440 688 370M776 400L798 426M798 424L790 402" +
  "M754 490L738 516 728 600 720 640 690 650M752 492L742 590 720 650M670 570L742 590L800 680 812 690M626 460L656 540M640 512h18l6 44-24 0M632 434h18v6h-14M656 560L696 600M612 296l40 20M716 252l-40 10 8 30M606 202v70" +
  "M248 628L300 650 410 674 520 652 600 632 700 660M240 648L300 644 420 660 500 640 600 620 700 646M220 690L262 640M384 690L424 650M270 620h16v40h-20v-40M386 586L408 616 424 650M484 600L500 560 504 610M532 604L550 636 560 650M560 590L566 640M610 590L614 626M650 604L656 640M686 626L690 690M378 576L394 600M446 640l-14 30M490 600l-4 40M520 626l20 50M584 640v24M650 640l4 20M700 646l-4 44" +
  "M150 410l-2 8M150 450L142 470M138 540L146 600M180 636l20 14M376 264v20M376 344l4 20M502 440v20M500 500l4 30";
const southLines =
  "M66 200L110 120 120 110M180 90L232 20M66 190L105 130M74 226L124 150M220 34L300 40M300 0L290 30M240 0L250 22 300 12M260 10L250 30M270 60L300 90 310 120M388 20V90M400 0L388 50 450 36M388 80L440 130M390 86l50 26M400 40l-6 50M420 90l36 20v50M440 130l20-6M450 110l20 60-20 20M430 180l50 6M300 0L400 12 560 4M330 0l60 24 90-12M440 10l10 26M520 0v50M514 20l10 36 20-20M560 0l20 16M600 0v14M640 0l10 20M680 0l10 46M110 86l40 20M120 120l-10-30M310 110v24" +
  "M780 0L800 34 826 60 870 108M774 70L826 60 800 90 790 110M826 60L806 100 812 130 840 180M850 190L880 240M722 45l16-28M688 20v30l34-4" +
  "M520 384L550 434M530 380l20 50M330 530L380 560M340 540L366 516 384 556M270 570l26 20M268 596l12-30 24 14M456 490l26-10 20 8M868 580l36 8M550 640l-10 26M936 418L946 440M948 455V490M948 545v20M140 262h20M206 250h20M170 400L184 392M290 436h24M176 436h30M620 270h24M792 352l16 24h28M756 390L780 376M976 222h44M740 480l8 0M760 470h10M560 262l24 12M412 332h8M420 386l10 4M500 240l12-4M754 628l14 16M716 610l4 20M446 626v8M826 626h6M714 96v16M210 456l14 6M306 472l14-12M320 574h10M344 572h10";
const southShore =
  "M234 54L268 58 298 88M450 42L482 24 508 30 520 56 540 54 546 36 560 16 583 2 600 14 640 24 680 22 690 48M740 16L760 30 776 68M464 100L470 150 490 186M395 158L430 190 445 204";
const northShore =
  "M286 614L320 632 352 642 384 636M374 572L388 590 404 602M424 600L430 620 452 630 478 624 492 592 506 570M534 622L544 596M560 590L600 582";

// Isolated specks: x, y, width, height.
const northSpecks = [
  [230, 178, 6, 6], [300, 200, 14, 6], [282, 256, 8, 10], [344, 448, 6, 6], [292, 454, 12, 4], [240, 436, 6, 12], [534, 270, 14, 4], [534, 236, 8, 8],
  [474, 356, 6, 6], [484, 378, 4, 4], [528, 370, 12, 8], [186, 520, 8, 6], [340, 546, 6, 14], [390, 580, 18, 12], [524, 476, 16, 6], [514, 486, 6, 6],
  [560, 230, 8, 5], [548, 340, 8, 10], [332, 490, 4, 6], [370, 456, 6, 4], [550, 544, 10, 12], [440, 594, 8, 4], [316, 246, 4, 4],
  [462, 568, 8, 8], [300, 270, 10, 8], [124, 486, 8, 4],
];
const northGreenSpecks = [
  [696, 466, 8, 6], [770, 282, 6, 6], [756, 314, 4, 4], [724, 364, 10, 4], [292, 456, 8, 3], [372, 456, 5, 4], [334, 491, 4, 5], [536, 270, 10, 4],
  [556, 246, 4, 12], [342, 548, 4, 6], [186, 522, 6, 4], [230, 180, 4, 4], [376, 344, 5, 20], [376, 264, 4, 8], [534, 358, 10, 5], [484, 378, 4, 4],
  [590, 306, 12, 6], [626, 296, 8, 5], [634, 284, 10, 4], [600, 318, 6, 8], [586, 232, 4, 20], [566, 184, 8, 10], [320, 148, 5, 30], [190, 268, 24, 4],
];
const southSpecks = [
  [150, 60, 12, 4], [170, 40, 16, 4], [196, 10, 12, 8], [230, 90, 8, 4], [272, 84, 10, 10], [524, 86, 22, 6], [494, 144, 10, 10], [580, 230, 8, 6],
  [474, 260, 10, 6], [496, 320, 10, 22], [570, 320, 8, 10], [586, 326, 14, 8], [620, 266, 8, 6], [780, 322, 8, 8], [850, 298, 10, 6], [792, 318, 6, 10],
  [676, 402, 6, 12], [336, 412, 10, 4], [200, 434, 12, 4], [392, 456, 6, 18], [432, 512, 16, 6], [466, 512, 6, 4], [764, 570, 12, 14], [718, 436, 4, 4],
  [904, 480, 4, 4], [742, 508, 12, 4], [750, 492, 10, 8], [268, 624, 4, 4], [400, 498, 10, 6], [300, 546, 20, 8], [340, 570, 12, 8], [826, 624, 8, 6],
  [640, 272, 8, 4], [112, 320, 8, 14], [84, 290, 8, 6], [204, 382, 8, 6], [214, 340, 10, 6], [66, 232, 8, 14], [442, 628, 8, 8], [780, 336, 18, 6],
];
const southGreenSpecks = [
  [88, 292, 4, 4], [324, 362, 5, 4], [564, 528, 4, 5], [598, 524, 4, 4], [376, 660, 6, 4], [408, 660, 4, 5], [724, 318, 4, 8], [610, 386, 3, 4],
  [562, 238, 4, 4], [480, 258, 4, 6], [500, 178, 10, 6], [768, 470, 4, 10], [718, 630, 6, 8], [934, 352, 6, 4], [202, 396, 12, 5], [112, 386, 8, 4],
  [210, 350, 10, 6], [308, 546, 14, 5], [318, 572, 10, 6], [342, 572, 10, 8], [290, 94, 14, 6], [270, 82, 10, 4], [170, 404, 14, 6], [160, 384, 10, 6],
];
const Specks = ({ list, fill }) =>
  list.map(([x, y, w, h], i) => <rect key={i} x={x} y={y} width={w} height={h} fill={fill} />);

const MapView = () => (
  <MapCanvas viewBox="370 110 1014 436" shapeRendering="crispEdges">
    <g transform="translate(890 105) scale(.33333)">
      <path d={north} fill={C} />
      <path d={northPatches} fill={L} />
      <Specks list={northSpecks} fill={L} />
      <path d="M330 96L318 160 300 190M376 116L340 190" stroke={C} strokeWidth="9" fill="none" />
      <path d={northGreenBlobs} fill={G} />
      <path d={northLines} stroke={G} strokeWidth="3" fill="none" />
      <path d={northShore} stroke={G} strokeWidth="3" strokeDasharray="9 7" fill="none" />
      <path d="M582 272L612 318 660 336 710 362M582 356L612 318M654 330l4-20 30-14 34-6M610 290l60-36 12-24M60 382l36 8M690 300l4 30" stroke={C} strokeWidth="10" fill="none" />
      <Specks list={northGreenSpecks} fill={G} />
      <path d="M694 356l26-8 6 34 12 26-2 36-12 14-16-24-6-30-14-26zM768 346l16 6 4 22-6 26-8-4-8-26zM642 372l28-2 0 16-14 20zM640 556l22-2 6 20-16 6z" fill={C} />
      <path d="M728 420h9v16h-9zM768 342l12 6-6 30-6-10z" fill={G} />
      <path d="M694 362l4 24 12 20 6 30 10 18M790 354l-2 20M766 362l8 36M720 352l6 30 10 26" stroke={G} strokeWidth="3" strokeDasharray="8 6" fill="none" />
      <path d="M440 96l24-14M436 100v22M236 70l48 18" stroke={G} strokeWidth="2" fill="none" />
      <path d="M99 624h6v4h-6z" fill="#000" />
    </g>
    <g transform="translate(890 320) scale(.33333)">
      <path d="M60-20H222L236 22 190 82 156 112 110 84 104 120 66 190zM300 24l24-10 60 34 2 24-40 10-46-22z" fill={C} />
      <path d="M128 66l20-30 14 4-22 36z" fill="#fff" />
      <path d={southCyan} fill={C} />
      <path d="M98 90l30-8 34 30-30 8-20 30-10-20zM66 205l40-50 26-8-52 70z" fill="#fff" />
      <path d="M318 76l-12 50" stroke={C} strokeWidth="12" />
      <path d={southPatches} fill={L} />
      <Specks list={southSpecks} fill={L} />
      <path d={southGreenBlobs} fill={G} />
      <Specks list={southGreenSpecks} fill={G} />
      <path d={southLines} stroke={G} strokeWidth="3" fill="none" />
      <path d={southShore} stroke={G} strokeWidth="3" strokeDasharray="9 7" fill="none" />
      <path d="M621 63h3v3h-3zM766 646h12v4h-12z" fill="#000" />
    </g>
  </MapCanvas>
);

/* ---------- data ---------- */
const menus = [
  ["File", 34], ["Edit", 36], ["View", 41], ["Bookmarks", 75], ["Insert", 45],
  ["Selection", 64], ["Geoprocessing", 94], ["Customize", 72], ["Windows", 65], ["Help", 40],
];
const columns = [
  ["OBJECTID *", -0.4], ["SHAPE *", -0.5], ["Street", 0.3], ["SAFStreetName", 0.2], ["FeatureTyp", 0.35],
  ["SegmentTyp", 0.35], ["IncExFlag", -0.15], ["RB_Layer", 0], ["NonPed", 0.2], ["TrafDir", 0.3],
];
const rows = [
  ["EAST 168 STREET", "", "0", "T", -0.48],
  ["WEST 192 STREET", "", "0", "A", -0.55],
  ["UNION AVENUE", "", "0", "W", -0.6],
  ["UNION AVENUE", "BEHAGEN PLAYGROUND", "0", "W", -0.6],
  ["DELAFIELD AVENUE", "", "6", "T", -0.5],
  ["WEST 252 STREET", "", "0", "T", -0.55],
  ["CLAREMONT PARKWAY", "", "0", "T", -0.3],
  ["TOPPING AVENUE", "", "0", "W", -0.6],
  ["EAST 175 STREET", "", "0", "T", -0.48],
];

const Layer = ({ name, selected, ls, children }) => (
  <>
    <TreeRow $indent={27}>
      <Toggle />
      <Check viewBox="0 0 11 11">
        <path d="M.5.5h10v10H.5z" fill="#fff" stroke="#000" />
        <path d="M2.500 5.500l2 2.200 4-5" fill="none" stroke="#000" strokeWidth="1.800" />
      </Check>
      <LayerName $selected={selected} $ls={ls}>{name}</LayerName>
    </TreeRow>
    <TreeRow $indent={59}>{children}</TreeRow>
  </>
);

export default function App() {
  return (
    <Window>
      <GlobalStyle />
      <TitleBar>
        <AppName>
          {I.logo}
          <Text $ls={-0.2}>Untitled - ArcMap</Text>
        </AppName>
        <WindowButtons>
          <Icon w={11} h={11}><path d="M0 5.500h10" stroke="#8c8c8c" /></Icon>
          <Icon w={11} h={11}><path d="M.5.5h9v9h-9z" stroke="#8c8c8c" /></Icon>
          <Close s={11} w={1} c="#8c8c8c" />
        </WindowButtons>
      </TitleBar>
      <MenuBar>
        {menus.map(([m, w]) => (
          <MenuItem key={m} $w={w}><Text>{m}</Text></MenuItem>
        ))}
      </MenuBar>
      <ToolRows>
        <Toolbar $pad={3}>
          <Grip $gap={2} />
          {renderTools(["doc", "open", "save", "print", "|", "cut", "copy", "paste", "del", "|", "undo", "redo", "|", "add", "v", "|"])}
          <ScaleBox>
            <Text $ls={-0.8}>1:246,153</Text>
            <Chevron dir="down" w={1.2} />
          </ScaleBox>
          {renderTools(["|", "editor", "|", "table", "catalog", "search", "toolbox", "python", "|", "model"])}
          <Overflow><OverflowGlyph /></Overflow>
        </Toolbar>
        <Toolbar $pad={1}>
          <Grip $gap={2} />
          {renderTools(["zoomin", "zoomout", "pan", "globe", "|", "fixedin", "fixedout", "|", "back", "forward", "|", "selectf", "v", "clear", "|", "pointer", "|", "info*", "bolt", "popup", "|", "measure", "|", "find", "route", "xy", "|", "time", "|", "viewer"])}
          <Overflow><OverflowGlyph /></Overflow>
        </Toolbar>
      </ToolRows>

      <Work>
        <Contents>
          <PanelHeader>
            <Text $ls={-0.33}>Table Of Contents</Text>
            <Grow />
            <Pin />
            <Close />
          </PanelHeader>
          <PanelTools $lift={1}>{renderTools(["drawOrder*", "source", "visible", "selection", "|", "options"])}</PanelTools>
          <Tree>
            <TreeRow $indent={8}>
              <Toggle />
              <LayersIcon>{I.layers}</LayersIcon>
              <LayerName as="b" $ls={-0.5}>&#8202;Layers</LayerName>
            </TreeRow>
            <Layer name="library" ls={-0.4}>
              <Icon w={10} h={7}>
                <circle cx="5.500" cy="3.500" r="2.500" fill="#8a8a00" stroke="#000" />
              </Icon>
            </Layer>
            <Layer name="lion" selected ls={-0.1}>
              <Icon w={14} h={3}><path d="M0 1.500h14" stroke={G} /></Icon>
            </Layer>
            <Layer name="nybb" ls={-0.4}>
              <Icon w={15} h={11}><path d="M.5.5h14v10H.5z" fill={L} stroke="#6e6e6e" /></Icon>
            </Layer>
          </Tree>
        </Contents>

        <Main>
          <MapFrame>
            <MapView />
            <VScroll $h={436}>
              <ScrollArrow $h={30} $pb={12} $pr={1}><Chevron dir="up" /></ScrollArrow>
              <Thumb $h={216} />
              <Grow />
              <ScrollArrow $pr={1}><Chevron dir="down" /></ScrollArrow>
            </VScroll>
            <MapFooter>
              <ViewButton $on>
                <Icon w={9} h={9}>
                  <path d="M.5.5h8v8h-8z" fill="#fff5c8" stroke="#3a4a30" />
                  <path d="M2 7l5-5" stroke="#4a7a30" strokeWidth="2" />
                </Icon>
              </ViewButton>
              <ViewButton>
                <Icon w={8} h={9}>
                  <path d="M.5.5h5l2 2v6h-7zM2 4h4M2 6h4" fill="#fff" stroke="#444" />
                </Icon>
              </ViewButton>
              <Separator />
              <ViewButton $w={17}>
                <Icon w={9} h={9}>
                  <path d="M1 4a3.500 3.500 0 0 1 6.500-1.500M8 5a3.500 3.500 0 0 1-6.500 1.500" stroke="#0d5596" strokeWidth="1.300" />
                  <path d="M8.500 0v3.500H5zM.5 9V5.500H4z" fill="#0d5596" />
                </Icon>
              </ViewButton>
              <ViewButton>
                <Icon w={6} h={7}><path d="M0 0v7M4 0v7" stroke="#0d4fa0" strokeWidth="2" /></Icon>
              </ViewButton>
              <ScrollArrow $w={24} $pl={8}><Chevron dir="left" /></ScrollArrow>
              <Thumb $w={904} />
              <ScrollArrow $w={20}><Chevron dir="right" /></ScrollArrow>
            </MapFooter>
          </MapFrame>

          <TableDock>
            <PanelHeader $drop={2}>
              <Text>Table</Text>
              <Grow />
              <Pin />
              <Close />
            </PanelHeader>
            <PanelTools $h={26} $lift={1} $pl={3}>
              {renderTools(["options", "v", "|", "related", "v", "|", "selAttr", "switchSel", "clear"])}
            </PanelTools>
            <PanelHeader $drop={2}>
              <Text $ls={-0.1}>lion</Text>
              <Grow />
              <Close />
            </PanelHeader>
            <GridFrame>
              <GridTop>
                <Sheet>
                  <HeadCell />
                  {columns.map(([c, ls]) => (
                    <HeadCell key={c} $ls={ls}>{c}</HeadCell>
                  ))}
                  <HeadCell $partial>T</HeadCell>
                  {rows.map(([street, saf, ft, dir, ls], i) => (
                    <React.Fragment key={i}>
                      <RowHead>
                        {i === 0 && <Icon w={5} h={8}><path d="M.5 0L5 4 .5 8z" fill="#000" /></Icon>}
                      </RowHead>
                      <Cell $num $current={i === 0}>{i + 1}</Cell>
                      <Cell $ls={-0.3}>Polyline</Cell>
                      <Cell $ls={ls}>{street}</Cell>
                      <Cell $ls={-0.5}>{saf}</Cell>
                      <Cell>{ft}</Cell>
                      <Cell>U</Cell>
                      <Cell />
                      <Cell>B</Cell>
                      <Cell />
                      <Cell>{dir}</Cell>
                      <Cell $ls={-0.4} $last>DO</Cell>
                    </React.Fragment>
                  ))}
                </Sheet>
                <VScroll $w={16} $h={161}>
                  <ScrollArrow $pr={2}><Chevron dir="up" /></ScrollArrow>
                  <Thumb $w={15} $h={17} />
                  <Grow />
                  <ScrollArrow $pr={2}><Chevron dir="down" /></ScrollArrow>
                </VScroll>
              </GridTop>
              <HScroll>
                <ScrollArrow $w={16} $pr={2}><Chevron dir="left" /></ScrollArrow>
                <Thumb $w={99} $h={15} />
                <Grow />
                <ScrollArrow $w={17}><Chevron dir="right" /></ScrollArrow>
              </HScroll>
            </GridFrame>
            <NavBar>
              <NavButton $w={22}><Icon w={9} h={8}><path d="M0 0h2v8H0zM8 0v8L3 4z" fill="#000" /></Icon></NavButton>
              <NavButton $w={23}><Icon w={5} h={8}><path d="M4.500 0v8L0 4z" fill="#000" /></Icon></NavButton>
              <RecordBox><Text>1</Text></RecordBox>
              <NavButton $w={23}><Icon w={5} h={8}><path d="M.5 0v8L5 4z" fill="#000" /></Icon></NavButton>
              <NavButton $w={22}><Icon w={9} h={8}><path d="M6 0h2v8H6zM0 0v8l5-4z" fill="#000" /></Icon></NavButton>
              <Separator />
              <Tool name="allRecords" on />
              <Tool name="selRecords" />
              <Separator />
              <SelectionCount><Text $ls={-0.48}> (163960 out of 224013 Selected)</Text></SelectionCount>
            </NavBar>
            <SheetTab><Text $ls={-0.1}>lion</Text></SheetTab>
          </TableDock>
        </Main>

        <SideTabs>
          <SideTab $h={90} $gap={13} $ls={-0.1}><ToolboxWin /><span>ArcToolbox</span></SideTab>
          <SideTab $h={71} $ls={0.1}><CatalogWin /><span>Catalog</span></SideTab>
          <SideTab $h={68} $ls={0.05}><SearchWin /><span>Search</span></SideTab>
        </SideTabs>
      </Work>

      <StatusBar>
        <StatusCell $w={1128} />
        <StatusCell $w={20} />
        <StatusCell $w={257}><Text $ls={-0.54}>-74.36  40.779 Decimal Degrees</Text></StatusCell>
        <Grow />
        <Icon w={11} h={11}>
          <path d="M7 1h2v2H7zM4 4h2v2H4zM7 4h2v2H7zM1 7h2v2H1zM4 7h2v2H4zM7 7h2v2H7z" fill="#b8b8b8" />
        </Icon>
      </StatusBar>

      <Dialog>
        <DialogTitle>
          <Text $ls={-0.6}>Export Data</Text>
          <Close s={11} w={1.2} />
        </DialogTitle>
        <DialogRow $mt={11} $h={21}>
          <ExportLabel><Text $ls={-0.1}>Export:</Text></ExportLabel>
          <Select><Text $ls={-0.2}>Selected features</Text><Chevron dir="down" w={1.2} /></Select>
        </DialogRow>
        <DialogRow $mt={11}><Text $ls={-0.33}>Use the same coordinate system as:</Text></DialogRow>
        <DialogRow $mt={6}><Radio $on /><Text $ls={-0.33}>this layer's source data</Text></DialogRow>
        <DialogRow $mt={7}><Radio /><Text $ls={-0.38}>the data frame</Text></DialogRow>
        <DialogRow $mt={8} $h={26} $align="flex-start">
          <Radio $off />
          <TwoLines>
            <Text $ls={-0.24} $color="#838383">the feature dataset you export the data into</Text>
            <Text $ls={-0.26} $color="#838383">(only applies if you export to a feature dataset in a geodatabase)</Text>
          </TwoLines>
        </DialogRow>
        <DialogRow $mt={6}><Text $ls={-0.22}>Output feature class:</Text></DialogRow>
        <DialogRow $mt={7} $h={23} $pl={15}>
          <PathInput><Text $ls={-0.24}>C:\Users\sio2106\Google Drive\GISdata\serviceArea\lion_selected.s</Text></PathInput>
          <BrowseButton><Folder /></BrowseButton>
        </DialogRow>
        <Actions>
          <PushButton $primary><Text>OK</Text></PushButton>
          <PushButton><Text $ls={-0.2}>Cancel</Text></PushButton>
        </Actions>
      </Dialog>
      <Tooltip><Text $ls={-0.3}>Browse</Text></Tooltip>
    </Window>
  );
}
